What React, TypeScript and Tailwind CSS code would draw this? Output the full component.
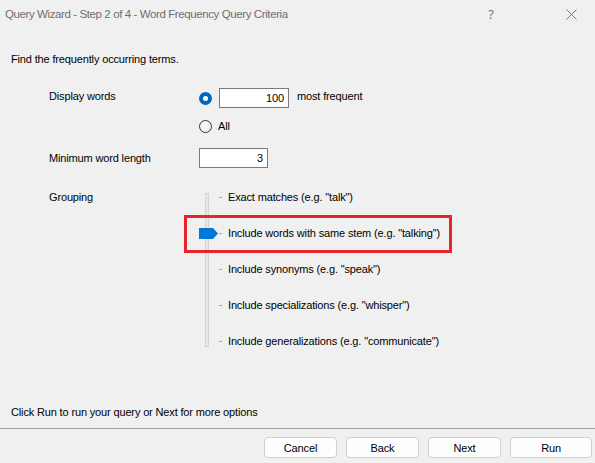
import React from "react";

const font = { fontFamily: '"Liberation Sans", Arial, sans-serif', letterSpacing: "-0.15px" };

function Radio({ checked }: { checked: boolean }) {
  if (checked) {
    return (
      <div className="w-[13px] h-[13px] rounded-full bg-[#0067c0] flex items-center justify-center">
        <div className="w-[5px] h-[5px] rounded-full bg-white" />
      </div>
    );
  }
  return <div className="w-[13px] h-[13px] rounded-full border border-[#333333] bg-[#f5f5f5]" />;
}

const levels = [
  'Exact matches (e.g. "talk")',
  'Include words with same stem (e.g. "talking")',
  'Include synonyms (e.g. "speak")',
  'Include specializations (e.g. "whisper")',
  'Include generalizations (e.g. "communicate")',
];

export default function App() {
  return (
    <div
      className="w-[595px] h-[463px] bg-[#f0f0f0] text-black text-[11px] leading-[14px] flex flex-col overflow-hidden"
      style={font}
    >
      {/* Title bar */}
      <div className="h-[28px] flex items-center relative shrink-0">
        <span
          className="pl-[5px] text-[11.5px] text-[#6f6f6f]"
          style={{ fontFamily: '"Liberation Sans", Arial, sans-serif', letterSpacing: "-0.4px" }}
        >
          Query Wizard - Step 2 of 4 - Word Frequency Query Criteria
        </span>
        <div className="ml-auto flex items-center">
          <span
            className="w-[20px] text-center text-[13px] text-[#7a7a7a]"
            style={{ fontFamily: '"Noto Sans", sans-serif' }}
          >
            ?
          </span>
          <div className="w-[65px]" />
          <svg width="11" height="11" viewBox="0 0 11 11" className="mr-[18px]">
            <path d="M0.5 0.5 L10.5 10.5 M10.5 0.5 L0.5 10.5" stroke="#7a7a7a" strokeWidth="1" />
          </svg>
        </div>
      </div>

      {/* Body */}
      <div className="h-[400px] flex flex-col shrink-0">
        <div className="pt-[24px] pl-[11px]">Find the frequently occurring terms.</div>

        {/* Display words */}
        <div className="mt-[22px] flex items-start">
          <div className="pl-[49px] w-[199px] mt-[1px]">Display words</div>
          <div className="flex items-center h-[20px]">
            <Radio checked />
          </div>
          <div className="ml-[7px] w-[70px] h-[20px] bg-white border border-[#7a7a7a] flex items-center justify-end pr-[4px]">
            100
          </div>
          <div className="ml-[8px] mt-[1px]">most frequent</div>
        </div>

        {/* All */}
        <div className="mt-[11px] flex items-center h-[14px]">
          <div className="w-[199px]" />
          <Radio checked={false} />
          <span className="ml-[6px]">All</span>
        </div>

        {/* Minimum word length */}
        <div className="mt-[15px] flex items-start">
          <div className="pl-[49px] w-[199px] mt-[3px]">Minimum word length</div>
          <div className="w-[69px] h-[20px] bg-white border border-[#7a7a7a] flex items-center justify-end pr-[4px]">
            3
          </div>
        </div>

        {/* Grouping */}
        <div className="mt-[11px] flex items-start">
          <div className="pl-[49px] w-[199px] mt-[11px]">Grouping</div>
          <div className="relative flex">
            {/* track */}
            <div className="absolute left-[6px] top-[14px] w-[4px] h-[154px] border border-[#d4d4d4] bg-[#e6e6e6]" />
            {/* thumb */}
            <svg className="absolute left-0 top-[49px]" width="19" height="11" viewBox="0 0 19 11">
              <polygon points="0,0 14,0 19,5.5 14,11 0,11" fill="#0078d7" />
            </svg>
            {/* highlight box */}
            <div className="absolute left-[-15px] top-[36px] w-[268px] h-[38px] border-[3px] border-[#e8232a]" />
            <div className="w-[20px]" />
            <div className="flex flex-col">
              {levels.map((l) => (
                <div key={l} className="h-[36px] flex items-center">
                  <div className="w-[3px] h-[1px] bg-[#a8a8a8]" />
                  <span className="ml-[6px]">{l}</span>
                </div>
              ))}
            </div>
          </div>
        </div>

        <div className="mt-auto mb-[9px] pl-[11px]">Click Run to run your query or Next for more options</div>
      </div>

      {/* Separator */}
      <div className="h-[1px] bg-[#a0a0a0] shrink-0" />

      {/* Footer */}
      <div className="flex pt-[8px] pl-[264px] gap-[9px]">
        {["Cancel", "Back", "Next"].map((b) => (
          <div
            key={b}
            className="w-[73px] h-[21px] bg-[#fdfdfd] border border-[#d0d0d0] rounded-[4px] flex items-center justify-center"
          >
            {b}
          </div>
        ))}
        <div className="w-[82px] h-[21px] bg-[#fdfdfd] border border-[#d0d0d0] rounded-[4px] flex items-center justify-center">
          Run
        </div>
      </div>
    </div>
  );
}
